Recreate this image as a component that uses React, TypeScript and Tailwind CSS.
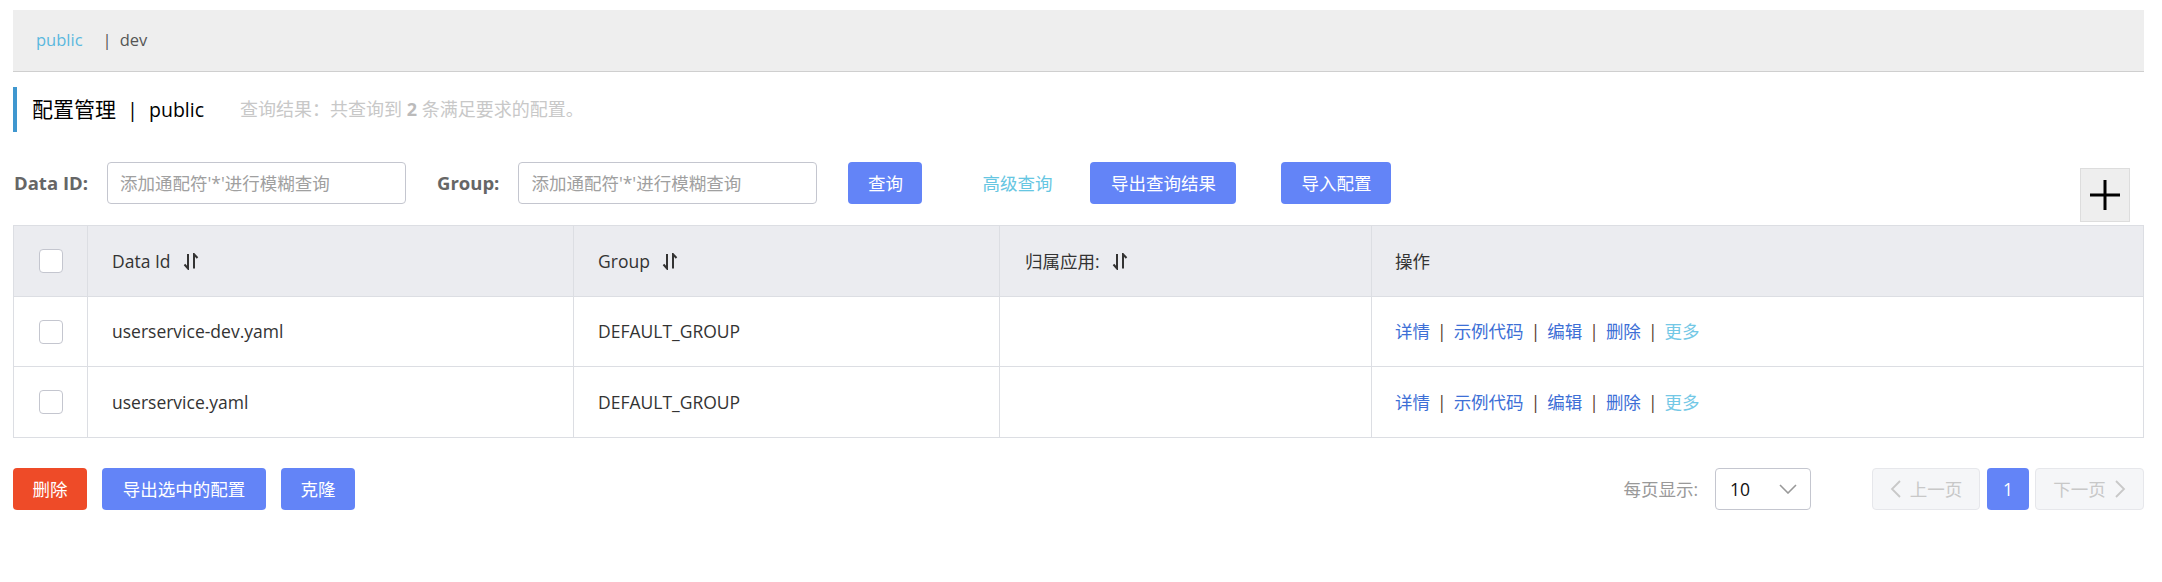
import React from "react";

const SortIcon = () => (
  <svg width="16" height="17" viewBox="0 0 16 17" className="ml-[12px] inline-block" fill="none" stroke="#333" strokeWidth="2">
    <path d="M5 1 V15.5 L1.5 11.5" />
    <path d="M11 15.5 V1.2 L14.5 5" />
  </svg>
);

const Checkbox = () => (
  <div className="w-[24px] h-[24px] rounded-[4px] border border-[#c4c6cf] bg-white" />
);

const rows = [
  { id: "userservice-dev.yaml", group: "DEFAULT_GROUP" },
  { id: "userservice.yaml", group: "DEFAULT_GROUP" },
];

export default function App() {
  const font = { fontFamily: '"Open Sans", "Noto Sans CJK SC", sans-serif' };
  return (
    <div className="w-[2162px] h-[582px] bg-white pl-[13px] pr-[18px] pt-[10px] text-[17.5px] text-[#333]" style={font}>
      {/* namespace bar */}
      <div className="h-[62px] bg-[#eeeeee] border-b border-[#cfcfcf] flex items-center pl-[23px] text-[16.5px]">
        <span className="text-[#5ab8de]">public</span>
        <span className="ml-[20px] text-[#555]">|</span>
        <span className="ml-[8px] text-[#555]">dev</span>
      </div>

      {/* title */}
      <div className="mt-[15px] h-[45px] border-l-4 border-[#3f97cf] flex items-center pl-[15px]">
        <span className="text-[21px] text-black">配置管理</span>
        <span className="text-[20px] text-black ml-[11px]">|</span>
        <span className="text-[19.5px] text-black ml-[11px]">public</span>
        <span className="ml-[36px] text-[18px] text-[#c8c8c8]">
          查询结果：共查询到 <b className="font-bold text-[#bbbbbb]">2</b> 条满足要求的配置。
        </span>
      </div>

      {/* filter row */}
      <div className="mt-[30px] flex items-start h-[63px]">
        <div className="h-[42px] flex items-center">
          <span className="font-bold text-[#666] ml-[1px] text-[18.5px]">Data ID:</span>
          <input
            className="ml-[19px] w-[299px] h-[42px] rounded-[4px] border border-[#c4c6cf] px-[12px] text-[17.5px] outline-none placeholder:text-[#a0a0a0]"
            placeholder="添加通配符'*'进行模糊查询"
            style={font}
          />
          <span className="ml-[31px] font-bold text-[#666] text-[18.5px]">Group:</span>
          <input
            className="ml-[19px] w-[299px] h-[42px] rounded-[4px] border border-[#c4c6cf] px-[12px] text-[17.5px] outline-none placeholder:text-[#a0a0a0]"
            placeholder="添加通配符'*'进行模糊查询"
            style={font}
          />
          <button className="ml-[31px] w-[74px] h-[42px] rounded-[4px] bg-[#6384f7] text-white">查询</button>
          <span className="ml-[60px] text-[#66c6e2]">高级查询</span>
          <button className="ml-[38px] w-[146px] h-[42px] rounded-[4px] bg-[#6384f7] text-white">导出查询结果</button>
          <button className="ml-[45px] w-[110px] h-[42px] rounded-[4px] bg-[#6384f7] text-white">导入配置</button>
        </div>
        <div className="ml-auto mr-[14px] mt-[6px] w-[50px] h-[54px] bg-[#eeeeee] border border-[#dddddd] flex items-center justify-center">
          <svg width="32" height="32" viewBox="0 0 32 32" stroke="#000" strokeWidth="3">
            <path d="M16 1 V31" />
            <path d="M1 16 H31" />
          </svg>
        </div>
      </div>

      {/* table */}
      <div className="border border-[#dcdee3]">
        <div className="grid grid-cols-[74px_486px_426px_372px_1fr] h-[71px] bg-[#ebecf0] border-b border-[#dcdee3]">
          <div className="border-r border-[#dcdee3] flex items-center justify-center"><Checkbox /></div>
          <div className="border-r border-[#dcdee3] flex items-center pl-[24px]">Data Id<SortIcon /></div>
          <div className="border-r border-[#dcdee3] flex items-center pl-[24px]">Group<SortIcon /></div>
          <div className="border-r border-[#dcdee3] flex items-center pl-[25px]">归属应用:<SortIcon /></div>
          <div className="flex items-center pl-[23px]">操作</div>
        </div>
        {rows.map((r, i) => (
          <div
            key={r.id}
            className={`grid grid-cols-[74px_486px_426px_372px_1fr] h-[70px] ${i < rows.length - 1 ? "border-b border-[#dcdee3]" : ""}`}
          >
            <div className="border-r border-[#dcdee3] flex items-center justify-center"><Checkbox /></div>
            <div className="border-r border-[#dcdee3] flex items-center pl-[24px]">{r.id}</div>
            <div className="border-r border-[#dcdee3] flex items-center pl-[24px]">{r.group}</div>
            <div className="border-r border-[#dcdee3]" />
            <div className="flex items-center pl-[23px] text-[#3d6fd6]">
              <span>详情</span>
              <span className="mx-[7px] text-[#5a4030]">|</span>
              <span>示例代码</span>
              <span className="mx-[7px] text-[#5a4030]">|</span>
              <span>编辑</span>
              <span className="mx-[7px] text-[#5a4030]">|</span>
              <span>删除</span>
              <span className="mx-[7px] text-[#5a4030]">|</span>
              <span className="text-[#73c8e6]">更多</span>
            </div>
          </div>
        ))}
      </div>

      {/* footer */}
      <div className="mt-[30px] flex items-center">
        <button className="w-[74px] h-[42px] rounded-[4px] bg-[#ee4b28] text-white">删除</button>
        <button className="ml-[15px] w-[164px] h-[42px] rounded-[4px] bg-[#6384f7] text-white">导出选中的配置</button>
        <button className="ml-[15px] w-[74px] h-[42px] rounded-[4px] bg-[#6384f7] text-white">克隆</button>

        <div className="ml-auto flex items-center">
          <span className="text-[#999]">每页显示:</span>
          <div className="ml-[17px] w-[96px] h-[42px] rounded-[4px] border border-[#c4c6cf] flex items-center justify-between pl-[14px] pr-[13px]">
            <span className="text-[#111]">10</span>
            <svg width="18" height="10" viewBox="0 0 18 10" fill="none" stroke="#999" strokeWidth="1.6">
              <path d="M1 1 L9 9 L17 1" />
            </svg>
          </div>
          <div className="ml-[61px] w-[108px] h-[42px] rounded-[4px] border border-[#e6e7eb] bg-[#f5f6f8] flex items-center justify-center text-[#c8c8c8]">
            <svg width="12" height="18" viewBox="0 0 12 18" fill="none" stroke="#c8c8c8" strokeWidth="1.8" className="mr-[8px]">
              <path d="M10 1 L2 9 L10 17" />
            </svg>
            上一页
          </div>
          <div className="ml-[7px] w-[42px] h-[42px] rounded-[4px] bg-[#6384f7] text-white flex items-center justify-center">1</div>
          <div className="ml-[6px] w-[109px] h-[42px] rounded-[4px] border border-[#e6e7eb] bg-[#f5f6f8] flex items-center justify-center text-[#c8c8c8]">
            下一页
            <svg width="12" height="18" viewBox="0 0 12 18" fill="none" stroke="#c8c8c8" strokeWidth="1.8" className="ml-[8px]">
              <path d="M2 1 L10 9 L2 17" />
            </svg>
          </div>
        </div>
      </div>
    </div>
  );
}
